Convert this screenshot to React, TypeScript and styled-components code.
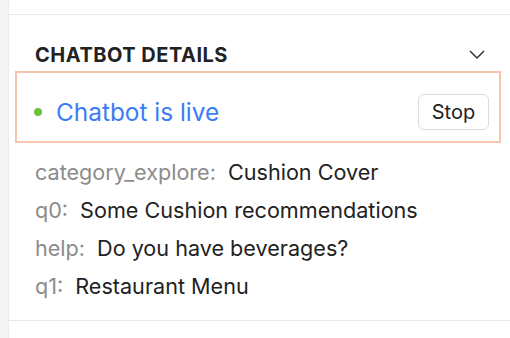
import { createGlobalStyle } from "styled-components";
import styled from "styled-components";

const GlobalStyle = createGlobalStyle`
  body {
    margin: 0;
    background: #ffffff;
    font-family: Inter, "Liberation Sans", sans-serif;
  }
`;

const Page = styled.div`
  display: flex;
  width: 510px;
  height: 338px;
  overflow: hidden;
`;

const Strip = styled.div`
  width: 8px;
  flex-shrink: 0;
  background: #f4f4f5;
  border-right: 1px solid #ececec;
`;

const Main = styled.div`
  flex: 1;
  padding-top: 14px;
`;

const Section = styled.section`
  border-top: 1px solid #e8e8e8;
  border-bottom: 1px solid #e8e8e8;
  padding: 28px 9px 16px 6px;
  height: 307px;
  box-sizing: border-box;
`;

const Header = styled.div`
  display: flex;
  align-items: center;
  justify-content: space-between;
  padding: 0 16px 0 20px;
  height: 24px;
  margin-bottom: 4px;
`;

const Title = styled.h3`
  margin: 0;
  font-size: 20px;
  font-weight: 700;
  letter-spacing: 0.5px;
  color: #222222;
`;

const StatusBox = styled.div`
  display: flex;
  align-items: center;
  justify-content: space-between;
  border: 2px solid #f5c5ad;
  height: 72px;
  box-sizing: border-box;
  padding: 10px 10px 0 17px;
`;

const Status = styled.div`
  display: flex;
  align-items: center;
  gap: 14px;
`;

const Dot = styled.span`
  width: 8px;
  height: 8px;
  border-radius: 50%;
  background: #6cc33f;
`;

const LiveText = styled.span`
  font-size: 24.4px;
  color: #3b7cf5;
`;

const StopButton = styled.button`
  font-family: inherit;
  font-size: 20px;
  color: #222222;
  background: #ffffff;
  border: 1px solid #dddddd;
  border-radius: 6px;
  width: 71px;
  height: 36px;
  padding: 0;
`;

const Details = styled.div`
  display: flex;
  flex-direction: column;
  padding: 10px 0 0 20px;
`;

const Row = styled.div`
  display: flex;
  align-items: center;
  height: 38px;
  font-size: 21.6px;
`;

const Label = styled.span`
  color: #8c8c8c;
  margin-right: 12px;
`;

const Value = styled.span`
  color: #222222;
`;

const rows = [
  ["category_explore", "Cushion Cover"],
  ["q0", "Some Cushion recommendations"],
  ["help", "Do you have beverages?"],
  ["q1", "Restaurant Menu"],
];

export default function App() {
  return (
    <>
      <GlobalStyle />
      <Page>
        <Strip />
        <Main>
          <Section>
            <Header>
              <Title>CHATBOT DETAILS</Title>
              <svg width="16" height="10" viewBox="0 0 16 10" fill="none">
                <path d="M1 1l7 7 7-7" stroke="#333" strokeWidth="1.5" />
              </svg>
            </Header>
            <StatusBox>
              <Status>
                <Dot />
                <LiveText>Chatbot is live</LiveText>
              </Status>
              <StopButton>Stop</StopButton>
            </StatusBox>
            <Details>
              {rows.map(([k, v]) => (
                <Row key={k}>
                  <Label>{k}:</Label>
                  <Value>{v}</Value>
                </Row>
              ))}
            </Details>
          </Section>
        </Main>
      </Page>
    </>
  );
}
